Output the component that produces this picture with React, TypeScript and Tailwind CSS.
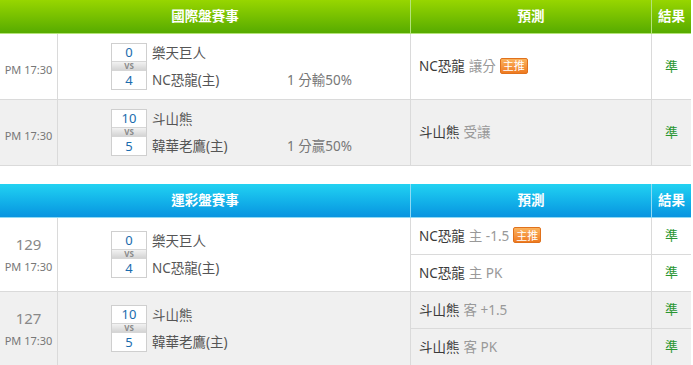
const font = "font-['Noto_Sans','Noto_Sans_CJK_TC',sans-serif]";

type Match = { home: string; away: string; homeScore: number; awayScore: number; line?: string };

function ScoreBox({ a, b }: { a: number; b: number }) {
  return (
    <div className="flex w-[36px] flex-col border border-[#cfcfcf] bg-white">
      <div className="flex h-[17px] items-center justify-center text-[13px] leading-none text-[#1a6cae]">{a}</div>
      <div className="flex h-[10px] items-center justify-center border-y border-[#d6d6d6] bg-gradient-to-b from-[#f2f2f2] to-[#d4d4d4] text-[8px] font-bold leading-none text-[#8a8a8a]">
        VS
      </div>
      <div className="flex h-[18px] items-center justify-center text-[13px] leading-none text-[#1a6cae]">{b}</div>
    </div>
  );
}

function Teams({ m }: { m: Match }) {
  return (
    <div className="flex items-center pl-[53px]">
      <ScoreBox a={m.homeScore} b={m.awayScore} />
      <div className="ml-[5px] flex h-[47px] flex-col justify-between py-[1px] text-[13.5px] text-[#555]">
        <div className="leading-[18px]">{m.home}</div>
        <div className="flex leading-[18px]">
          <span className="w-[135px]">{m.away}</span>
          {m.line && <span className="text-[#777]">{m.line}</span>}
        </div>
      </div>
    </div>
  );
}

function Badge() {
  return (
    <span className="ml-[4px] inline-flex h-[16px] w-[28px] -translate-y-[1px] items-center justify-center rounded-[2px] border border-[#e0711c] bg-gradient-to-b from-[#fbb25c] to-[#ee7a1f] text-[11px] leading-none text-white">
      主推
    </span>
  );
}

function Pred({ team, tip, badge }: { team: string; tip: string; badge?: boolean }) {
  return (
    <div className="flex items-center pl-[8px] text-[13.5px]">
      <span className="text-[#3a3a3a]">{team}</span>
      <span className="ml-[4px] text-[#999]">{tip}</span>
      {badge && <Badge />}
    </div>
  );
}

function Header({ title, from, to, line }: { title: string; from: string; to: string; line: string }) {
  return (
    <div className={`grid h-[34px] grid-cols-[411px_241px_39px] border-b text-[13.5px] font-bold text-white ${from} ${to} ${line} bg-gradient-to-b`}>
      <div className={`flex items-center justify-center border-r ${line}`}>{title}</div>
      <div className={`flex items-center justify-center border-r ${line}`}>預測</div>
      <div className="flex items-center justify-center">結果</div>
    </div>
  );
}

const intl: (Match & { tip: [string, string, boolean] })[] = [
  { home: "樂天巨人", away: "NC恐龍(主)", homeScore: 0, awayScore: 4, line: "1 分輸50%", tip: ["NC恐龍", "讓分", true] },
  { home: "斗山熊", away: "韓華老鷹(主)", homeScore: 10, awayScore: 5, line: "1 分贏50%", tip: ["斗山熊", "受讓", false] },
];

const lottery: (Match & { no: number; tips: [string, string, boolean][] })[] = [
  {
    no: 129,
    home: "樂天巨人",
    away: "NC恐龍(主)",
    homeScore: 0,
    awayScore: 4,
    tips: [
      ["NC恐龍", "主 -1.5", true],
      ["NC恐龍", "主 PK", false],
    ],
  },
  {
    no: 127,
    home: "斗山熊",
    away: "韓華老鷹(主)",
    homeScore: 10,
    awayScore: 5,
    tips: [
      ["斗山熊", "客 +1.5", false],
      ["斗山熊", "客 PK", false],
    ],
  },
];

export default function App() {
  return (
    <div className={`h-[365px] w-[693px] overflow-hidden bg-white ${font}`}>
      <div className="w-[691px]">
        <Header title="國際盤賽事" from="from-[#97d600]" to="to-[#56ab00]" line="border-[#b4e37a]" />
        {intl.map((m, i) => (
          <div
            key={i}
            className={`grid h-[66px] grid-cols-[58px_353px_241px_39px] border-b border-[#dadada] ${i % 2 ? "bg-[#f0f0f0]" : "bg-white"}`}
          >
            <div className="flex items-center justify-center border-r border-[#dadada] pt-[8px] text-[11px] text-[#777]">PM 17:30</div>
            <div className="flex border-r border-[#dadada]">
              <Teams m={m} />
            </div>
            <div className="flex border-r border-[#dadada]">
              <Pred team={m.tip[0]} tip={m.tip[1]} badge={m.tip[2]} />
            </div>
            <div className="flex items-center justify-center text-[13px] text-[#2a9632]">準</div>
          </div>
        ))}
      </div>

      <div className="mt-[18px] w-[691px]">
        <Header title="運彩盤賽事" from="from-[#22d2f2]" to="to-[#0a94e0]" line="border-[#8fdaf4]" />
        {lottery.map((m, i) => (
          <div
            key={i}
            className={`grid h-[74px] grid-cols-[58px_353px_280px] border-b border-[#dadada] ${i % 2 ? "bg-[#f0f0f0]" : "bg-white"}`}
          >
            <div className="flex flex-col items-center justify-center border-r border-[#dadada]">
              <span className="text-[15px] leading-[20px] text-[#888]">{m.no}</span>
              <span className="mt-[5px] text-[11px] leading-[16px] text-[#777]">PM 17:30</span>
            </div>
            <div className="flex border-r border-[#dadada]">
              <Teams m={m} />
            </div>
            <div className="flex flex-col">
              {m.tips.map((t, j) => (
                <div key={j} className={`grid flex-1 grid-cols-[241px_39px] ${j === 0 ? "border-b border-[#dadada]" : ""}`}>
                  <div className="flex border-r border-[#dadada]">
                    <Pred team={t[0]} tip={t[1]} badge={t[2]} />
                  </div>
                  <div className="flex items-center justify-center text-[13px] text-[#2a9632]">準</div>
                </div>
              ))}
            </div>
          </div>
        ))}
      </div>
    </div>
  );
}
